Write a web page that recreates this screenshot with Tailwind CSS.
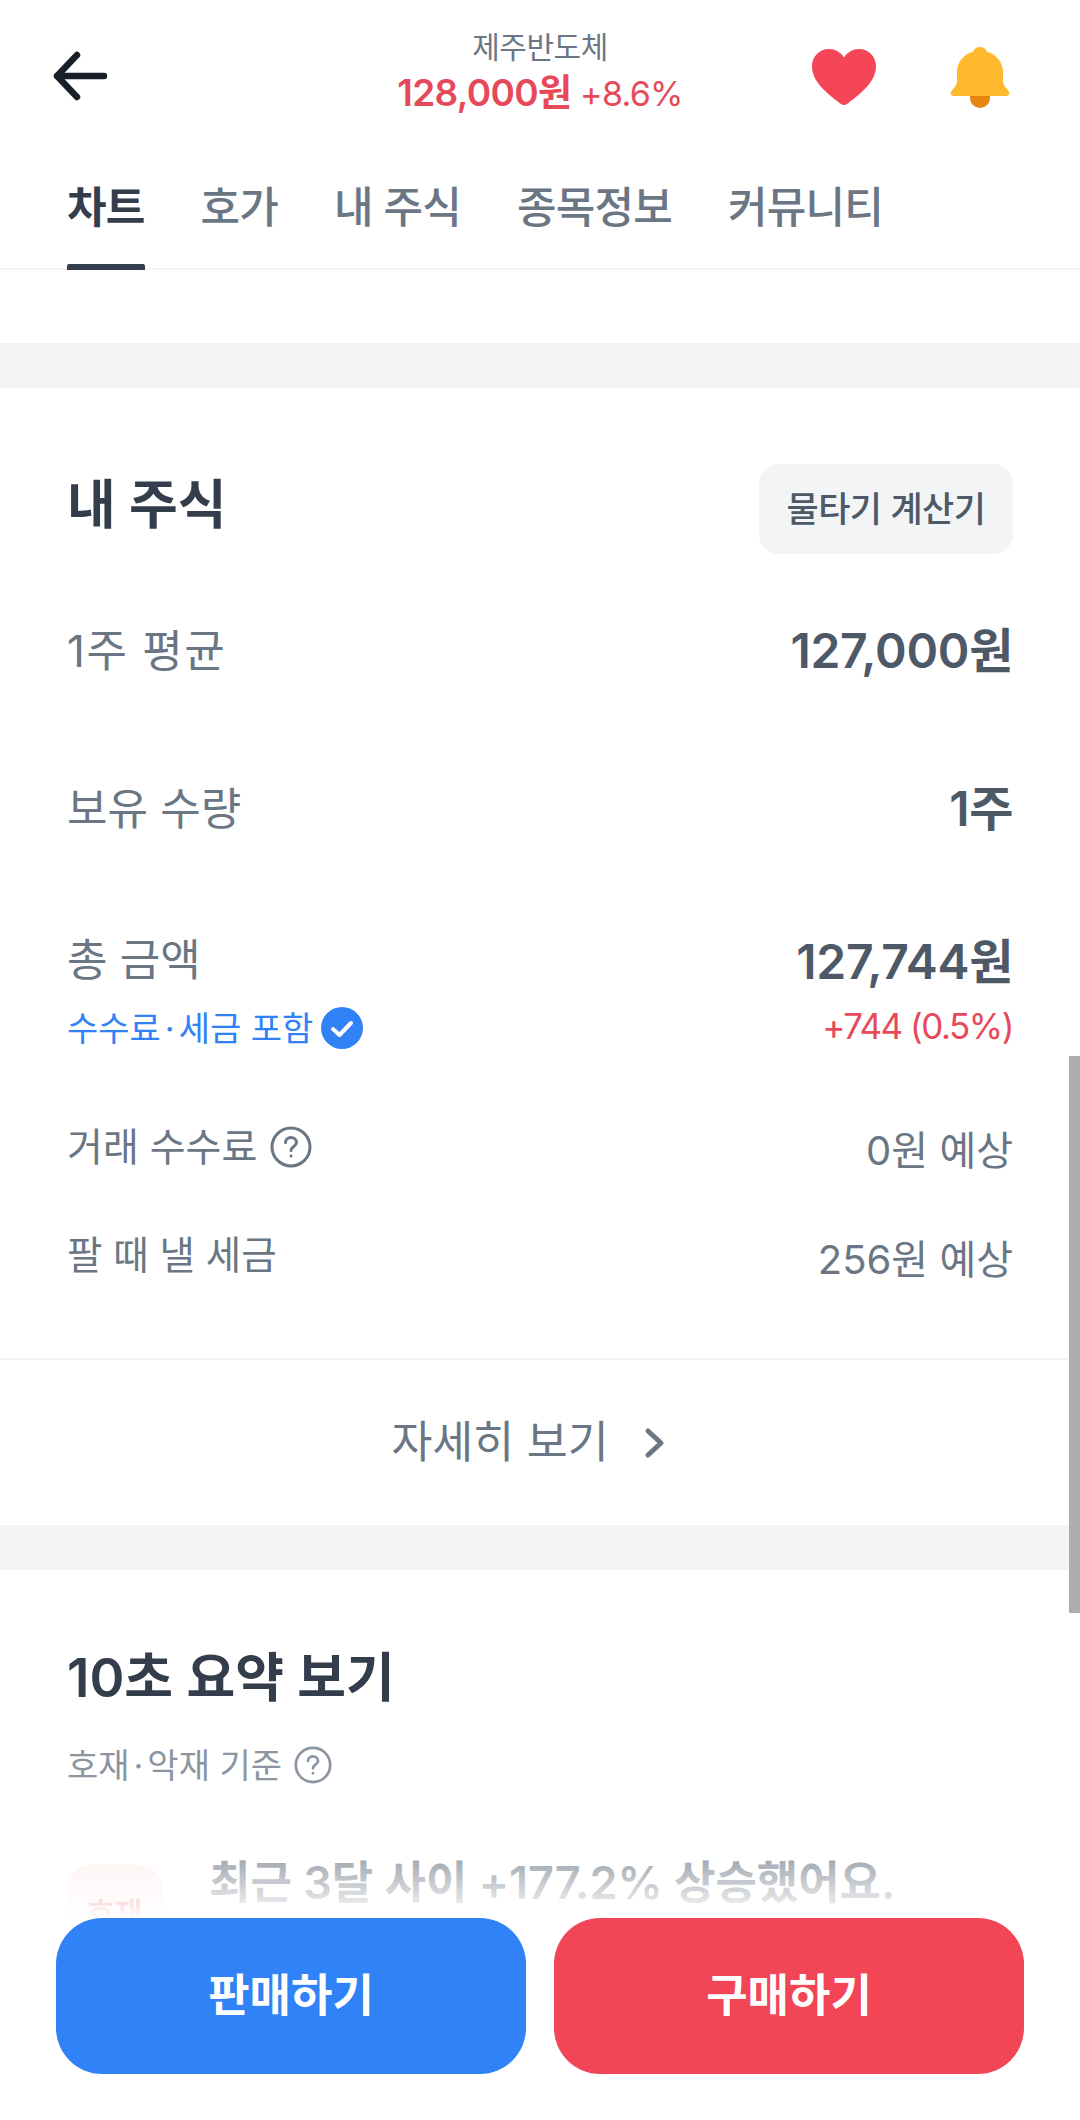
<!DOCTYPE html>
<html lang="ko">
<head>
    <meta charset="UTF-8">
    <title>내 주식</title>
    <script src="https://cdn.jsdelivr.net/npm/@tailwindcss/browser@4"></script>
</head>
<body class="bg-white font-['Inter','Noto_Sans_CJK_KR',sans-serif]">
<div class="relative w-[1080px] h-[2120px] overflow-hidden bg-white">

    <!-- header -->
    <header class="flex items-center justify-between h-[150px] pl-[50px] pr-[50px]">
        <svg class="w-[60px] h-[60px] mt-[2px]" viewBox="0 0 60 60" fill="none" stroke="#191f28" stroke-width="6.500" stroke-linecap="round" stroke-linejoin="round">
            <path d="M54 30H7M27 9L7 30l20 21"/>
        </svg>
        <div class="absolute left-[298px] w-[484px] top-[26px] text-center">
            <p class="text-[30px] leading-[42px] text-[#6b7684] tracking-[-0.5px]">제주반도체</p>
            <p class="text-[34px] leading-[50px] text-[#e64a5a] tracking-[-0.7px]"><span class="text-[37px] font-semibold">128,000원</span> +8.6%</p>
        </div>
        <div class="flex items-center gap-[73px] pr-[20px] mt-[3px]">
            <svg class="w-[66px] h-[60px]" viewBox="0 0 66 60"><path fill="#f44656" d="M33 58c-1.500 0-3-.700-4.500-2C16 46 1 35 1 19 1 9 9 2 18 2c6 0 11.500 3 15 8.500C36.500 5 42 2 48 2c9 0 17 7 17 17 0 16-15 27-27.500 37-1.500 1.300-3 2-4.500 2z"/></svg>
            <svg class="w-[60px] h-[62px]" viewBox="0 0 60 62">
                <path fill="#e8850f" d="M20 50h20v2a10 10 0 0 1-20 0z"/>
                <path fill="#ffb92c" d="M30 1c3.500 0 6 2 6.500 4.500C46 8 53 16 53 26v9c0 4 3 7 5.500 10 1.500 2 1 5-2.500 5H4c-3.500 0-4-3-2.500-5C4 42 7 39 7 35v-9C7 16 14 8 23.500 5.500 24 3 26.500 1 30 1z"/>
            </svg>
        </div>
    </header>

    <!-- tabs -->
    <nav class="flex gap-[56px] h-[120px] pl-[67px] border-b-2 border-[#f2f4f6] text-[43px] text-[#6b7684] tracking-[-0.8px]">
        <a class="relative pt-[25px] font-semibold text-[#333d4b]">차트<span class="absolute left-0 right-0 bottom-[-2px] h-[6px] rounded-t-[2px] bg-[#333d4b]"></span></a>
        <a class="pt-[25px] font-medium">호가</a>
        <a class="pt-[25px] font-medium">내 주식</a>
        <a class="pt-[25px] font-medium">종목정보</a>
        <a class="pt-[25px] font-medium">커뮤니티</a>
    </nav>

    <div class="h-[73px]"></div>
    <div class="h-[45px] bg-[#f2f4f6]"></div>

    <!-- my stock -->
    <section class="px-[67px]">
        <div class="flex items-center justify-between pt-[76px]">
            <h2 class="pb-[6px] text-[53px] font-semibold text-[#333d4b]">내 주식</h2>
            <button class="w-[254px] h-[90px] rounded-[20px] bg-[#f2f4f6] text-[35px] font-medium text-[#4e5968] tracking-[-0.5px]">물타기 계산기</button>
        </div>
        <div class="flex items-center justify-between h-[72px] mt-[61px]">
            <span class="text-[44px] text-[#6b7684] tracking-[1.5px]">1주 평균</span>
            <span class="text-[48px] font-semibold text-[#4e5968] tracking-[-0.3px]">127,000원</span>
        </div>
        <div class="flex items-center justify-between h-[72px] mt-[86px]">
            <span class="text-[44px] text-[#6b7684]">보유 수량</span>
            <span class="text-[48px] font-semibold text-[#4e5968] tracking-[-0.3px]">1주</span>
        </div>
        <div class="flex justify-between mt-[84px]">
            <div>
                <p class="h-[62px] leading-[62px] text-[44px] text-[#6b7684]">총 금액</p>
                <p class="flex items-center gap-[8px] mt-[11px] h-[52px] text-[34px] text-[#3182f6]"><span>수수료<span class="mx-[4px]">·</span>세금 포함</span>
                    <svg class="w-[42px] h-[42px]" viewBox="0 0 42 42"><circle cx="21" cy="21" r="21" fill="#3182f6"/><path d="M12 22l6.500 6L30 16" fill="none" stroke="#fff" stroke-width="4" stroke-linecap="round" stroke-linejoin="round"/></svg>
                </p>
            </div>
            <div class="text-right">
                <p class="h-[62px] leading-[66px] text-[48px] font-semibold text-[#4e5968] tracking-[-0.3px]">127,744원</p>
                <p class="mt-[9px] h-[52px] leading-[52px] text-[35px] text-[#e64a5a] tracking-[-1.5px]">+744 (0.5%)</p>
            </div>
        </div>
        <div class="flex items-center justify-between h-[60px] mt-[63px] text-[#6b7684]">
            <span class="flex items-center gap-[13px] text-[39px]">거래 수수료
                <svg class="w-[42px] h-[42px]" viewBox="0 0 42 42" fill="none" stroke="#6b7684" stroke-width="3"><circle cx="21" cy="21" r="19"/><path d="M15.500 16.500c0-3 2.500-5 5.500-5s5.500 2 5.500 5c0 4-5.500 4-5.500 8" stroke-linecap="round"/><circle cx="21" cy="30" r="1.500" fill="#6b7684" stroke="none"/></svg>
            </span>
            <span class="pt-[8px] text-[40px]">0원 예상</span>
        </div>
        <div class="flex items-center justify-between h-[60px] mt-[49px] text-[#6b7684]">
            <span class="text-[38.500px]">팔 때 낼 세금</span>
            <span class="pt-[8px] text-[40px]">256원 예상</span>
        </div>
    </section>

    <div class="mt-[72px] border-t-2 border-[#f2f4f6] flex items-center justify-center gap-[34px] h-[167px] pr-[22px] text-[44.500px] text-[#6b7684]">
        <span>자세히 보기</span>
        <svg class="w-[24px] h-[36px]" viewBox="0 0 24 36" fill="none" stroke="#6b7684" stroke-width="5" stroke-linecap="round" stroke-linejoin="round"><path d="M5 6l13 12L5 30"/></svg>
    </div>
    <div class="h-[45px] bg-[#f2f4f6]"></div>

    <!-- summary -->
    <section class="px-[67px]">
        <h2 class="mt-[72px] h-[72px] leading-[72px] text-[53px] font-semibold text-[#333d4b]">10초 요약 보기</h2>
        <p class="flex items-center gap-[12px] mt-[26px] h-[50px] text-[34px] text-[#8b95a1]"><span>호재<span class="mx-[4px]">·</span>악재 기준</span>
            <svg class="w-[38px] h-[38px]" viewBox="0 0 42 42" fill="none" stroke="#8b95a1" stroke-width="3"><circle cx="21" cy="21" r="19"/><path d="M15.500 16.500c0-3 2.500-5 5.500-5s5.500 2 5.500 5c0 4-5.500 4-5.500 8" stroke-linecap="round"/><circle cx="21" cy="30" r="1.500" fill="#8b95a1" stroke="none"/></svg>
        </p>
        <div class="flex gap-[47px] mt-[75px]">
            <span class="w-[95px] h-[96px] rounded-[24px] bg-[#ffeeee] flex items-center justify-center text-[30px] font-semibold text-[#f44656]">호재</span>
            <p class="text-[45px] font-semibold text-[#6b7684] leading-[36px]">최근 3달 사이 +177.2% 상승했어요.</p>
        </div>
    </section>

    <!-- scrollbar -->
    <div class="absolute right-0 top-[1056px] w-[11px] h-[557px] bg-[#adadad]"></div>

    <!-- bottom buttons over the scrolling content -->
    <div class="absolute left-0 right-0 bottom-0 h-[296px] bg-gradient-to-b from-white/0 via-white to-white via-[32%]">
        <div class="absolute left-[56px] right-[56px] top-[94px] grid grid-cols-2 gap-[28px]">
            <button class="h-[156px] rounded-[46px] bg-[#3182f6] text-white text-[45px] font-semibold">판매하기</button>
            <button class="h-[156px] rounded-[46px] bg-[#f24556] text-white text-[45px] font-semibold">구매하기</button>
        </div>
    </div>
</div>
</body>
</html>
